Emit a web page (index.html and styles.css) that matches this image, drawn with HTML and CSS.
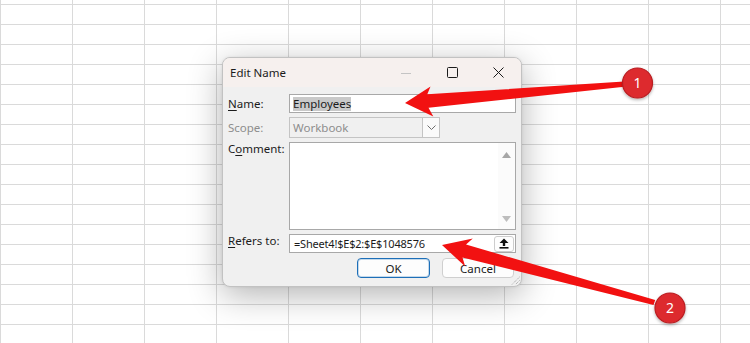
FILE: index.html
```html
<!DOCTYPE html>
<html lang="en">
<head>
    <meta charset="UTF-8">
    <meta name="viewport" content="width=device-width, initial-scale=1.0">
    <title>Edit Name</title>
    <link rel="stylesheet" href="styles.css">
</head>
<body>
    <div class="sheet">
        <div class="dialog">
            <div class="titlebar">
                <span class="title">Edit Name</span>
                <div class="controls">
                    <button class="ctl" disabled>
                        <svg width="10" height="10" viewBox="0 0 10 10"><path d="M0 5.5H10" stroke="#c4c4c4" stroke-width="1"/></svg>
                    </button>
                    <button class="ctl">
                        <svg width="11" height="11" viewBox="0 0 11 11"><rect x="0.5" y="0.5" width="10" height="10" rx="1" fill="none" stroke="#1b1b1b" stroke-width="1"/></svg>
                    </button>
                    <button class="ctl">
                        <svg width="11" height="11" viewBox="0 0 11 11"><path d="M0.5 0.5L10.5 10.5M10.5 0.5L0.5 10.5" stroke="#1b1b1b" stroke-width="1"/></svg>
                    </button>
                </div>
            </div>

            <div class="form">
                <label class="lbl"><u>N</u>ame:</label>
                <div class="field"><span class="picked">Employees</span></div>

                <label class="lbl off">Scope:</label>
                <div class="combo">
                    <span class="combo-text">Workbook</span>
                    <span class="combo-drop">
                        <svg width="9" height="5" viewBox="0 0 9 5"><path d="M0.5 0.5L4.5 4.5L8.5 0.5" fill="none" stroke="#6e6e6e" stroke-width="1"/></svg>
                    </span>
                </div>

                <label class="lbl top">C<u>o</u>mment:</label>
                <div class="memo">
                    <div class="memo-bar">
                        <svg width="9" height="6" viewBox="0 0 9 6"><path d="M4.5 0L9 6H0Z" fill="#a6a6a6"/></svg>
                        <svg width="9" height="6" viewBox="0 0 9 6"><path d="M0 0H9L4.5 6Z" fill="#bdbdbd"/></svg>
                    </div>
                </div>

                <label class="lbl top"><u>R</u>efers to:</label>
                <div class="field ref">
                    <span class="ref-text">=Sheet4!$E$2:$E$1048576</span>
                    <span class="collapse">
                        <svg width="10" height="11" viewBox="0 0 10 11"><path d="M5 0.5L9.5 5H6.2V8H3.8V5H0.5Z" fill="#111"/><rect x="0.5" y="9" width="9" height="1.6" fill="#111"/></svg>
                    </span>
                </div>

                <div class="actions">
                    <button class="btn btn-default">OK</button>
                    <button class="btn">Cancel</button>
                </div>
            </div>

            <span class="grip">
                <svg width="9" height="9" viewBox="0 0 9 9"><path d="M8.5 1L1 8.5M8.5 4.5L4.5 8.5" stroke="#9a9a9a" stroke-width="1" stroke-dasharray="1 1"/></svg>
            </span>
        </div>

        <!-- callout arrows drawn over the screenshot -->
        <svg class="callouts" width="750" height="343" viewBox="0 0 750 343">
            <defs>
                <filter id="soft" x="-50%" y="-50%" width="200%" height="200%">
                    <feDropShadow dx="0" dy="1.5" stdDeviation="1.5" flood-color="#000" flood-opacity="0.3"/>
                </filter>
            </defs>
            <polygon class="arrow" points="624,81.5 427.3,94.3 430.5,86.5 405,103 433.3,116.5 428.5,107.7 624.3,86.8"/>
            <polygon class="arrow" points="655.2,300.1 466,244.5 472.8,238.5 442,245 465.2,266.5 462.5,257.5 653.5,305.1"/>
            <g filter="url(#soft)">
                <circle class="badge" cx="637.5" cy="83" r="15"/>
                <circle class="badge" cx="670" cy="308" r="15"/>
            </g>
            <text class="badge-num" x="637.5" y="88">1</text>
            <text class="badge-num" x="670" y="313">2</text>
        </svg>
    </div>
</body>
</html>
```

FILE: styles.css
```css
* {
    margin: 0;
    padding: 0;
    box-sizing: border-box;
}

body {
    width: 750px;
    height: 343px;
    overflow: hidden;
    font-family: 'Segoe UI', 'Noto Sans', sans-serif;
    font-size: 11.5px;
    color: #1b1b1b;
    background-color: #fff;
    background-image:
        linear-gradient(to right, #dadada 1px, transparent 1px),
        linear-gradient(to bottom, #dadada 1px, transparent 1px);
    background-size: 72px 20px;
    background-position: 0 4px;
}

.sheet {
    position: relative;
    width: 750px;
    height: 343px;
}

.dialog {
    position: absolute;
    left: 222px;
    top: 57px;
    width: 300px;
    height: 230px;
    background: #f0f0f0;
    border: 1px solid #c2c2c2;
    border-radius: 8px;
    box-shadow: 0 8px 34px rgba(0,0,0,0.3), 0 0 3px rgba(0,0,0,0.08);
    overflow: hidden;
}

.titlebar {
    display: flex;
    align-items: center;
    justify-content: space-between;
    height: 29px;
    background: #f6f0ee;
}

.title {
    padding-left: 7px;
    line-height: 16px;
}

.controls {
    display: flex;
}

.ctl {
    width: 46px;
    height: 29px;
    display: flex;
    align-items: center;
    justify-content: center;
    border: none;
    background: none;
}

.form {
    display: grid;
    grid-template-columns: 61px 1fr;
    grid-template-rows: 19px 21px 88px 19px;
    row-gap: 4px;
    padding: 7px 5px 0 5px;
}

.lbl {
    align-self: center;
    line-height: 16px;
}

.lbl.top {
    align-self: start;
    margin-top: -1px;
}

.lbl.off {
    color: #8d8d8d;
}

.lbl u {
    text-underline-offset: 2px;
}

.field {
    display: flex;
    align-items: center;
    justify-content: space-between;
    background: #fff;
    border: 1px solid #a8a8a8;
    padding-left: 3px;
    line-height: 14px;
}

.picked {
    background: #c9c9c9;
}

.combo {
    display: flex;
    width: 151px;
    border: 1px solid #c4c4c4;
    background: #f0f0f0;
    color: #8d8d8d;
}

.combo-text {
    flex: 1;
    display: flex;
    align-items: center;
    padding-left: 3px;
}

.combo-drop {
    width: 17px;
    display: flex;
    align-items: center;
    justify-content: center;
    border-left: 1px solid #c4c4c4;
    background: #fafafa;
}

.memo {
    display: flex;
    justify-content: flex-end;
    background: #fff;
    border: 1px solid #a8a8a8;
}

.memo-bar {
    width: 17px;
    display: flex;
    flex-direction: column;
    justify-content: space-between;
    align-items: center;
    padding: 9px 0 7px;
    background: #fbfbfb;
}

.ref {
    padding-left: 4px;
    padding-right: 1px;
}

.ref-text {
    font-size: 11px;
    letter-spacing: -0.2px;
}

.collapse {
    width: 20px;
    height: 16px;
    display: flex;
    align-items: center;
    justify-content: center;
    background: #fdfdfd;
    border: 1px solid #cdcdcd;
    border-radius: 3px;
}

.actions {
    grid-column: 1 / -1;
    display: flex;
    justify-content: flex-end;
    gap: 12px;
    margin-top: 1px;
    padding-right: 2px;
}

.btn {
    width: 72px;
    height: 20px;
    font-family: inherit;
    font-size: 11.5px;
    color: #1b1b1b;
    background: #fdfdfd;
    border: 1px solid #cfcfcf;
    border-radius: 4px;
}

.btn-default {
    width: 73px;
    border: 1px solid #1d6fb8;
    box-shadow: inset 0 0 0 1px rgba(29,111,184,0.25);
}

.grip {
    position: absolute;
    right: 1px;
    bottom: 1px;
    display: flex;
}

.callouts {
    position: absolute;
    left: 0;
    top: 0;
    pointer-events: none;
}

.arrow {
    fill: #f21111;
}

.badge {
    fill: #dd2a2f;
    stroke: #b91c20;
    stroke-width: 1.2;
}

.badge-num {
    fill: #fff;
    font-family: 'Noto Sans', sans-serif;
    font-size: 14px;
    text-anchor: middle;
}
```
